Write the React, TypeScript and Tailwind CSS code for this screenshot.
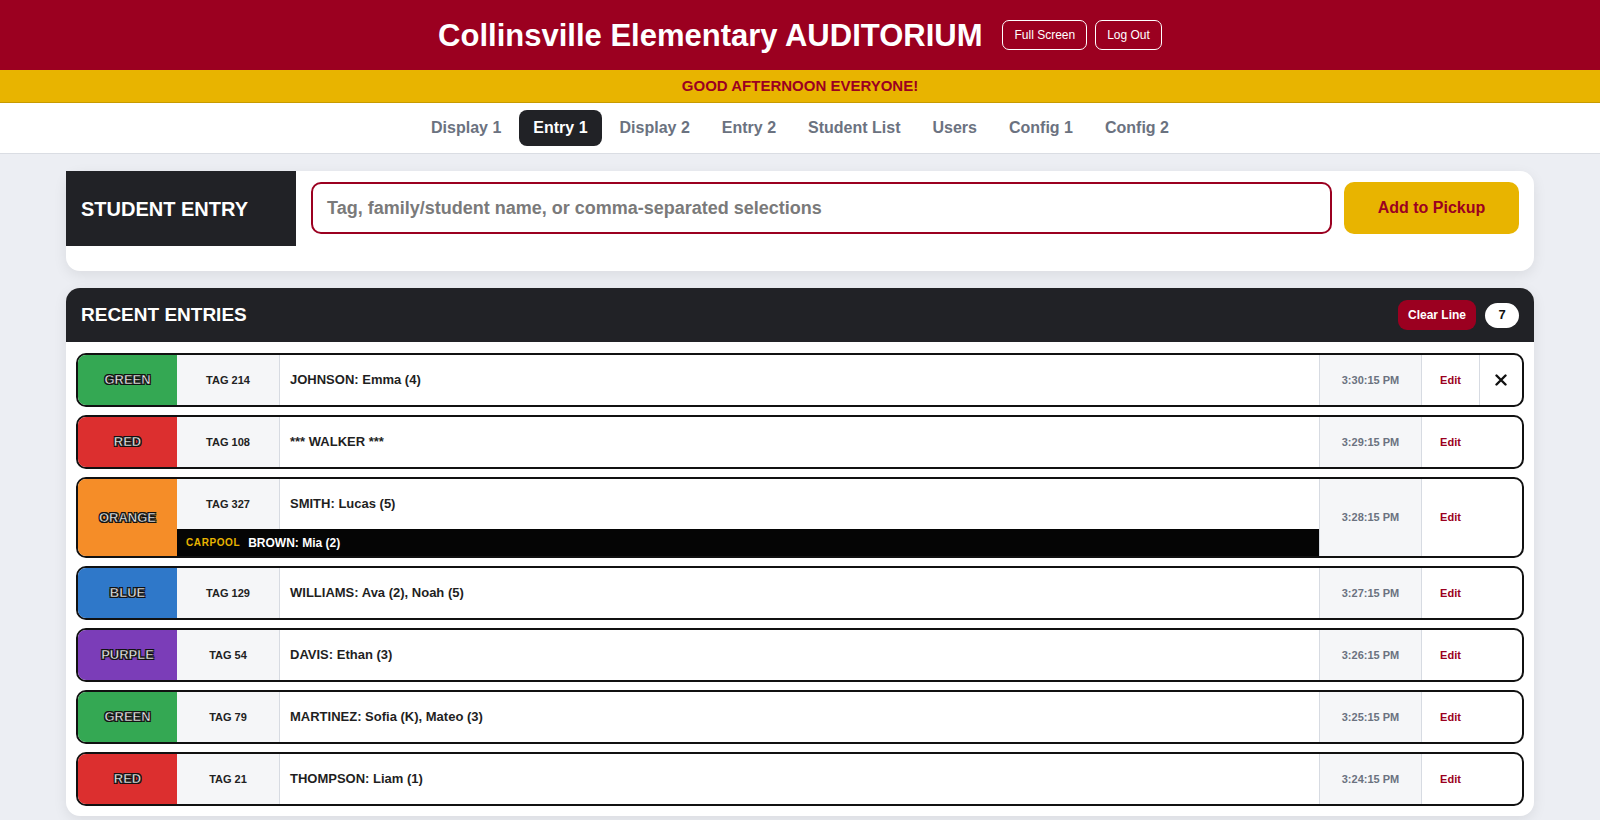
import React from "react";

type Entry = {
  color: string;
  bg: string;
  tag: string;
  name: string;
  time: string;
  carpool?: string;
  x?: boolean;
};

const entries: Entry[] = [
  { color: "GREEN", bg: "bg-[#34a853]", tag: "TAG 214", name: "JOHNSON: Emma (4)", time: "3:30:15 PM", x: true },
  { color: "RED", bg: "bg-[#dc2f2f]", tag: "TAG 108", name: "*** WALKER ***", time: "3:29:15 PM" },
  { color: "ORANGE", bg: "bg-[#f58d28]", tag: "TAG 327", name: "SMITH: Lucas (5)", time: "3:28:15 PM", carpool: "BROWN: Mia (2)" },
  { color: "BLUE", bg: "bg-[#2f78c9]", tag: "TAG 129", name: "WILLIAMS: Ava (2), Noah (5)", time: "3:27:15 PM" },
  { color: "PURPLE", bg: "bg-[#7b3db8]", tag: "TAG 54", name: "DAVIS: Ethan (3)", time: "3:26:15 PM" },
  { color: "GREEN", bg: "bg-[#34a853]", tag: "TAG 79", name: "MARTINEZ: Sofia (K), Mateo (3)", time: "3:25:15 PM" },
  { color: "RED", bg: "bg-[#dc2f2f]", tag: "TAG 21", name: "THOMPSON: Liam (1)", time: "3:24:15 PM" },
];

const tabs = ["Display 1", "Entry 1", "Display 2", "Entry 2", "Student List", "Users", "Config 1", "Config 2"];

function Row({ e }: { e: Entry }) {
  const tagCell = (
    <div className="w-[103px] shrink-0 bg-[#f5f6f8] border-r border-[#d7dbe2] flex items-center justify-center text-[11px] font-bold text-[#222]">
      {e.tag}
    </div>
  );
  const nameCell = (
    <div className="flex-1 flex items-center pl-[10px] text-[13px] font-bold text-[#1f1f1f]">{e.name}</div>
  );
  return (
    <div className="flex border-2 border-[#111] rounded-[10px] overflow-hidden bg-white">
      <div
        className={`w-[99px] shrink-0 ${e.bg} flex items-center justify-center text-[13px] font-bold text-[#e8e8e8] [-webkit-text-stroke:0.5px_#111] [text-shadow:-1px_-1px_0_#111,1px_-1px_0_#111,-1px_1px_0_#111,1px_1px_0_#111]`}
      >
        {e.color}
      </div>
      {e.carpool ? (
        <div className="flex-1 flex flex-col">
          <div className="flex h-[50px]">
            {tagCell}
            {nameCell}
          </div>
          <div className="h-[27px] bg-[#050505] flex items-center pl-[9px] gap-[8px]">
            <span className="text-[10px] font-bold tracking-[0.6px] text-[#e8b400]">CARPOOL</span>
            <span className="text-[12px] font-bold text-white">{e.carpool}</span>
          </div>
        </div>
      ) : (
        <div className="flex-1 flex h-[50px]">
          {tagCell}
          {nameCell}
        </div>
      )}
      <div className="w-[102px] shrink-0 bg-[#f5f6f8] border-l border-[#d7dbe2] flex items-center justify-center text-[11px] font-bold text-[#6b7280]">
        {e.time}
      </div>
      <div className="w-[58px] shrink-0 border-l border-[#d7dbe2] flex items-center justify-center text-[11px] font-bold text-[#9b0020]">
        Edit
      </div>
      {e.x ? (
        <div className="w-[43px] shrink-0 border-l border-[#d7dbe2] flex items-center justify-center">
          <svg width="12" height="12" viewBox="0 0 12 12">
            <path d="M1.5 1.5 L10.5 10.5 M10.5 1.5 L1.5 10.5" stroke="#111" strokeWidth="2.4" strokeLinecap="round" />
          </svg>
        </div>
      ) : (
        <div className="w-[43px] shrink-0" />
      )}
    </div>
  );
}

export default function App() {
  return (
    <div className="min-h-[820px] bg-[#eceef3] font-['Liberation_Sans',Arial,sans-serif]">
      <header className="h-[70px] bg-[#9b0020] flex items-center justify-center gap-[20px]">
        <h1 className="text-[31px] font-bold text-white leading-none">Collinsville Elementary AUDITORIUM</h1>
        <div className="flex gap-[8px]">
          <button className="h-[30px] px-[11px] border border-white rounded-[7px] text-[12px] text-white">Full Screen</button>
          <button className="h-[30px] px-[11px] border border-white rounded-[7px] text-[12px] text-white">Log Out</button>
        </div>
      </header>
      <div className="h-[33px] bg-[#e8b400] border-b border-[#c79a00] flex items-center justify-center text-[15px] font-bold text-[#9b0020]">
        GOOD AFTERNOON EVERYONE!
      </div>
      <nav className="h-[51px] bg-white border-b border-[#dadde3] flex items-center justify-center gap-[4px]">
        {tabs.map((t) => (
          <div
            key={t}
            className={
              t === "Entry 1"
                ? "h-[36px] px-[14px] rounded-[8px] bg-[#212226] text-white text-[16px] font-bold flex items-center"
                : "h-[36px] px-[14px] rounded-[8px] text-[#6b7280] text-[16px] font-bold flex items-center"
            }
          >
            {t}
          </div>
        ))}
      </nav>
      <main className="px-[66px] pt-[17px] pb-[20px] flex flex-col gap-[17px]">
        <section className="bg-white rounded-[14px] shadow-[0_4px_14px_rgba(0,0,0,0.08)] h-[100px] flex items-start">
          <div className="w-[230px] h-[75px] bg-[#212226] flex items-center pl-[15px] text-[20px] font-bold text-white shrink-0">
            STUDENT ENTRY
          </div>
          <div className="flex-1 flex gap-[12px] pt-[11px] pl-[15px] pr-[15px]">
            <div className="flex-1 h-[52px] border-2 border-[#9b0020] rounded-[10px] flex items-center px-[14px] text-[18px] font-bold text-[#7a7a7a]">
              Tag, family/student name, or comma-separated selections
            </div>
            <button className="w-[175px] h-[52px] bg-[#e8b400] rounded-[10px] text-[16px] font-bold text-[#9b0020]">
              Add to Pickup
            </button>
          </div>
        </section>
        <section className="bg-white rounded-[14px] shadow-[0_4px_14px_rgba(0,0,0,0.08)] overflow-hidden">
          <div className="h-[54px] bg-[#212226] flex items-center justify-between pl-[15px] pr-[15px]">
            <span className="text-[19px] font-bold text-white">RECENT ENTRIES</span>
            <div className="flex items-center gap-[9px]">
              <button className="h-[30px] px-[10px] bg-[#9b0020] rounded-[9px] text-[12px] font-bold text-white">Clear Line</button>
              <span className="h-[25px] w-[34px] bg-white rounded-full flex items-center justify-center text-[13px] font-bold text-[#111]">7</span>
            </div>
          </div>
          <div className="px-[10px] pt-[11px] pb-[10px] flex flex-col gap-[8px]">
            {entries.map((e, i) => (
              <Row key={i} e={e} />
            ))}
          </div>
        </section>
      </main>
    </div>
  );
}
